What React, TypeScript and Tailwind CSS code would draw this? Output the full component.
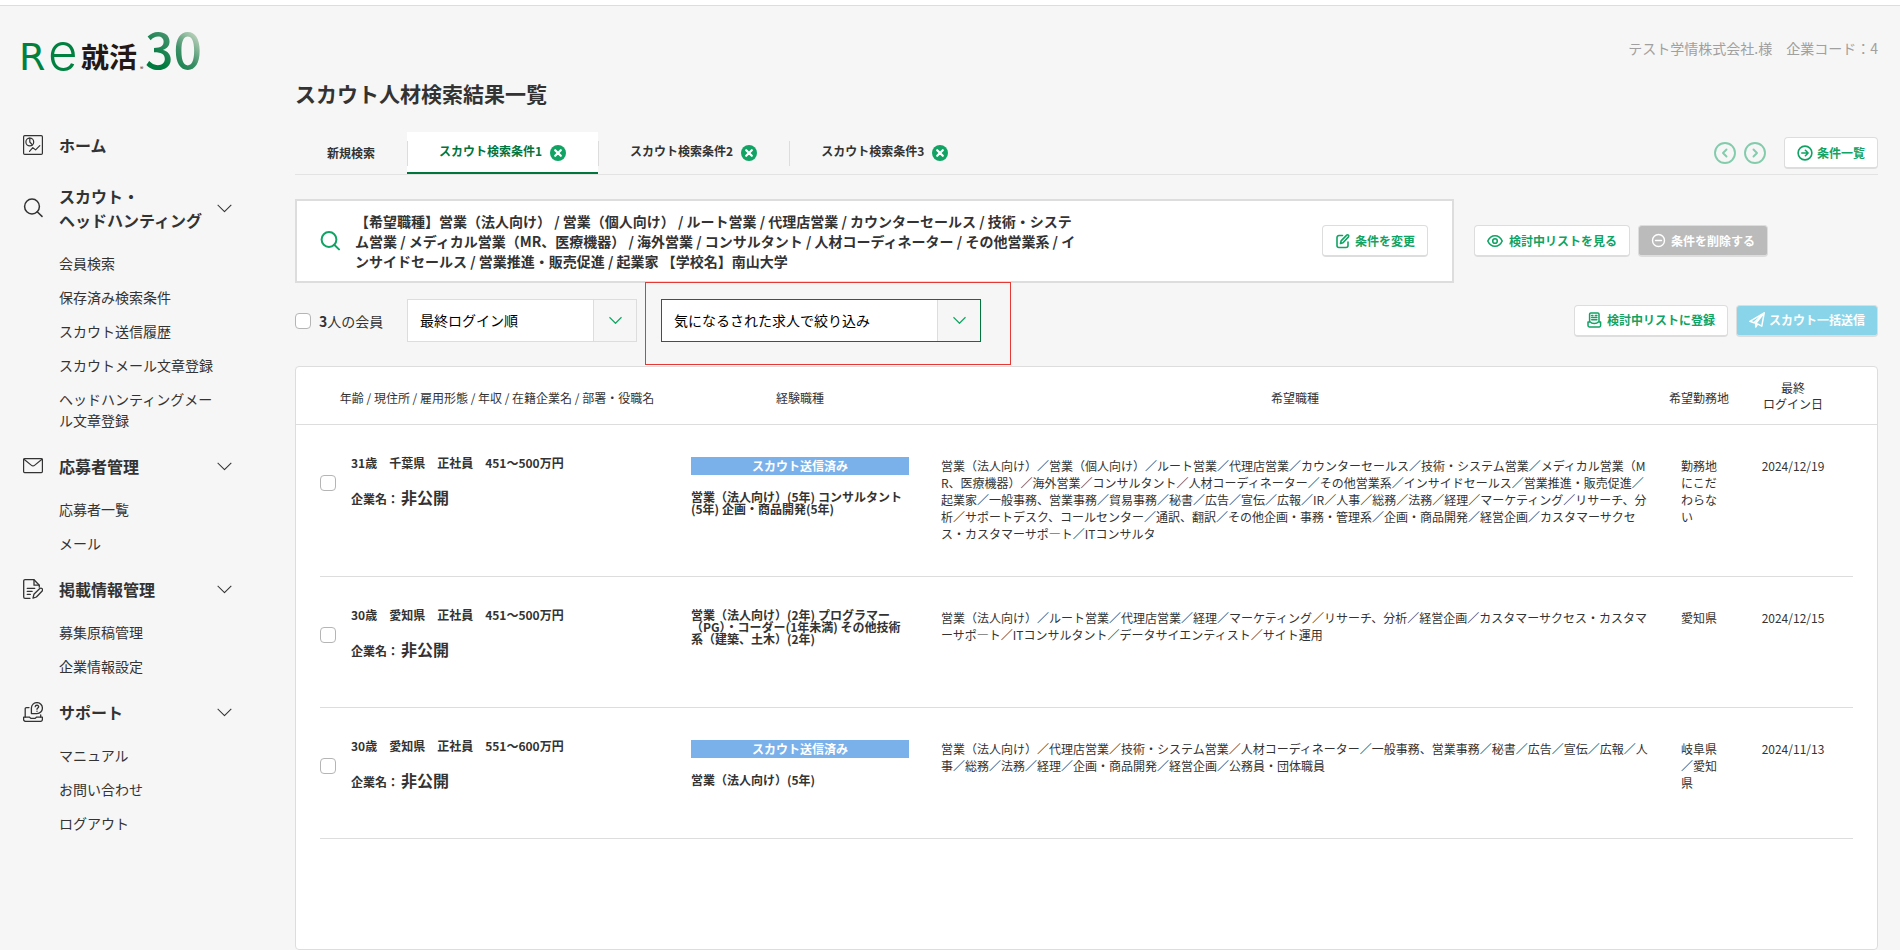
import type { ReactNode } from 'react'
import clsx from 'clsx'

interface MenuSection {
  title: string[]
  icon: ReactNode
  items: string[]
}

interface Member {
  profile: string
  scouted: boolean
  experience: string
  desired: string
  place: string
  lastLogin: string
}

const iconProps = {
  fill: 'none',
  stroke: 'currentColor',
  strokeLinecap: 'round',
  strokeLinejoin: 'round',
  'aria-hidden': true,
} as const

function HomeIcon() {
  return (
    <svg {...iconProps} viewBox="0 0 20 20" width="20" height="20" strokeWidth="1.2">
      <rect x="0.6" y="0.6" width="18.8" height="18.8" rx="1.2" />
      <circle cx="6.8" cy="7" r="3.9" />
      <path d="M6.8 3.1V7l2.6 2.9" />
      <path d="M6.5 16.3l3.3-3.6 2.8 2.2 4.2-4.2" />
    </svg>
  )
}

function SearchIcon({ strokeWidth = 1.5 }: { strokeWidth?: number }) {
  return (
    <svg {...iconProps} viewBox="0 0 20 20" width="20" height="20" strokeWidth={strokeWidth}>
      <circle cx="9" cy="8.5" r="7.4" />
      <path d="M14.2 13.8l4.8 4.6" />
    </svg>
  )
}

function MailIcon() {
  return (
    <svg {...iconProps} viewBox="0 0 20 20" width="20" height="20" strokeWidth="1.2">
      <rect x="0.6" y="2.6" width="18.8" height="14" rx="1" />
      <path d="M1 3.2l7.2 5.9c1.1.9 2.5.9 3.6 0L19 3.2" />
    </svg>
  )
}

function DocumentIcon() {
  return (
    <svg {...iconProps} viewBox="0 0 20 20" width="20" height="20" strokeWidth="1.3">
      <path d="M7 19.3H2A1.3 1.3 0 0 1 .7 18V2A1.3 1.3 0 0 1 2 .7h9l5.3 5.5v2" />
      <path d="M11 .9v5.3h5.1M4.3 9.4h7.4M4.3 12.4h4.8M4.3 15.4h3" />
      <path d="M10 19.2l.9-3.9 5.9-5.8c1.6-1.2 3.6.8 2.4 2.5l-5.8 6z" />
    </svg>
  )
}

function SupportIcon() {
  return (
    <svg {...iconProps} viewBox="0 0 20 20" width="20" height="20" strokeWidth="1.3">
      <path d="M2.2 15V6.8A1.2 1.2 0 0 1 3.4 5.6H6M17.7 12.8V15" />
      <path d="M.6 15.2h6l1.2 1.2h4.4l1.2-1.2h6v2.2a2 2 0 0 1-2 2H2.6a2 2 0 0 1-2-2z" />
      <path d="M8.4 11.6V6a5.5 5.5 0 1 1 5.5 5.6z" />
      <path d="M12.2 4.7c.2-2 3.6-1.9 3.5.1-.1 1.300-1.700 1.200-1.700 2.500M14 9.200v.1" />
    </svg>
  )
}

function ChevronDown({ size, strokeWidth = 1 }: { size: number; strokeWidth?: number }) {
  return (
    <svg {...iconProps} viewBox="0 0 14 14" width={size} height={size} strokeWidth={strokeWidth} strokeLinecap="square">
      <path d="M1 4l6 6 6-6" />
    </svg>
  )
}

function CloseIcon() {
  return (
    <svg viewBox="0 0 16 16" width="16" height="16" aria-hidden="true">
      <circle cx="8" cy="8" r="8" fill="#11a364" />
      <path d="M5.2 5.2l5.6 5.6M10.8 5.2l-5.6 5.6" stroke="#fff" strokeWidth="2.2" strokeLinecap="round" />
    </svg>
  )
}

function CircleChevron({ d }: { d: string }) {
  return (
    <svg {...iconProps} viewBox="0 0 22 22" width="22" height="22" strokeWidth="1.9">
      <circle cx="11" cy="11" r="10" />
      <path d={d} />
    </svg>
  )
}

function CircleArrowIcon() {
  return (
    <svg {...iconProps} viewBox="0 0 16 16" width="16" height="16" strokeWidth="1.6">
      <circle cx="8" cy="8" r="6.9" />
      <path d="M4.8 8h6M8.4 5.3L11.1 8l-2.7 2.7" />
    </svg>
  )
}

function EditIcon() {
  return (
    <svg {...iconProps} viewBox="0 0 16 16" width="16" height="16" strokeWidth="1.6">
      <path d="M7.5 2.5H4a2 2 0 0 0-2 2v8a2 2 0 0 0 2 2h7a2 2 0 0 0 2-2V9" />
      <path d="M5.5 10.5l.6-2.6 5.6-5.8c1.1-.9 2.7.5 1.8 1.8L8 9.8z" />
    </svg>
  )
}

function EyeIcon() {
  return (
    <svg {...iconProps} viewBox="0 0 18 16" width="18" height="16" strokeWidth="1.6">
      <path d="M.8 8C2.3 4.6 4.8 2.7 8 2.7S13.7 4.6 15.2 8c-1.5 3.4-4 5.3-7.2 5.3S2.3 11.4.8 8z" />
      <circle cx="8" cy="8" r="2.3" />
    </svg>
  )
}

function MinusCircleIcon() {
  return (
    <svg {...iconProps} viewBox="0 0 16 16" width="16" height="16" strokeWidth="1.4">
      <circle cx="7.5" cy="7.5" r="6" />
      <path d="M4.5 7.5h6" />
    </svg>
  )
}

function TrayIcon() {
  return (
    <svg {...iconProps} viewBox="0 0 16 16" width="16" height="16" strokeWidth="1.5">
      <path d="M2.6 9.5V2A1.2 1.2 0 0 1 3.8.9h7A1.2 1.2 0 0 1 12 2v7.5" />
      <path d="M4.7 3.5h1.2M8.3 3.5h1.6M4.7 5.6h5.2M4.7 7.7h5.2" />
      <path d="M1 10h2.500c1 2 6.600 2 7.600 0h2.500v3.600a1.400 1.400 0 0 1-1.400 1.400H2.400A1.400 1.400 0 0 1 1 13.600z" />
    </svg>
  )
}

function PlaneIcon() {
  return (
    <svg {...iconProps} viewBox="0 0 16 16" width="16" height="16" strokeWidth="1.5">
      <path d="M.9 9.3L15.2.9l-2.4 13.3-4.3-2.3zM.9 9.3l4 1.5L15.2.9 6.7 11.5v3.6l1.8-3" />
    </svg>
  )
}

function Logo() {
  return (
    <svg viewBox="0 0 180 46" width="180" height="46" className="overflow-visible" role="img" aria-label="Re就活 30">
      <defs>
        <linearGradient id="anniversary" gradientUnits="userSpaceOnUse" x1="140" y1="36" x2="172" y2="2">
          <stop offset="0" stopColor="#007a3e" />
          <stop offset="0.5" stopColor="#3d9068" />
          <stop offset="1" stopColor="#c3d6c0" />
        </linearGradient>
      </defs>
      <g fill="#008140">
        <text x="-4" y="40" fontSize="38" fontFamily="'DejaVu Sans', sans-serif">R</text>
        <text x="25" y="40" fontSize="51" fontWeight="300" fontFamily="Inter, sans-serif">e</text>
      </g>
      <text x="58" y="38" fontSize="28" fontWeight="700" fill="#231815" fontFamily="'Noto Sans CJK JP', sans-serif">
        就活
      </text>
      <text x="117" y="40" fontSize="5" fill="#231815" fontFamily="Inter, sans-serif">®</text>
      <text x="122" y="39" fontSize="50" fontWeight="500" fill="url(#anniversary)" fontFamily="'Noto Sans CJK JP', sans-serif">
        30
      </text>
    </svg>
  )
}

const menu: MenuSection[] = [
  {
    title: ['スカウト・', 'ヘッドハンティング'],
    icon: <SearchIcon />,
    items: ['会員検索', '保存済み検索条件', 'スカウト送信履歴', 'スカウトメール文章登録', 'ヘッドハンティングメール文章登録'],
  },
  { title: ['応募者管理'], icon: <MailIcon />, items: ['応募者一覧', 'メール'] },
  { title: ['掲載情報管理'], icon: <DocumentIcon />, items: ['募集原稿管理', '企業情報設定'] },
  { title: ['サポート'], icon: <SupportIcon />, items: ['マニュアル', 'お問い合わせ', 'ログアウト'] },
]

const savedTabs = ['スカウト検索条件1', 'スカウト検索条件2', 'スカウト検索条件3']

const members: Member[] = [
  {
    profile: '31歳　千葉県　正社員　451～500万円',
    scouted: true,
    experience: '営業（法人向け）(5年) コンサルタント(5年) 企画・商品開発(5年)',
    desired:
      '営業（法人向け）／営業（個人向け）／ルート営業／代理店営業／カウンターセールス／技術・システム営業／メディカル営業（MR、医療機器）／海外営業／コンサルタント／人材コーディネーター／その他営業系／インサイドセールス／営業推進・販売促進／起業家／一般事務、営業事務／貿易事務／秘書／広告／宣伝／広報／IR／人事／総務／法務／経理／マーケティング／リサーチ、分析／サポートデスク、コールセンター／通訳、翻訳／その他企画・事務・管理系／企画・商品開発／経営企画／カスタマーサクセス・カスタマーサポ―ト／ITコンサルタ',
    place: '勤務地にこだわらない',
    lastLogin: '2024/12/19',
  },
  {
    profile: '30歳　愛知県　正社員　451～500万円',
    scouted: false,
    experience: '営業（法人向け）(2年) プログラマー（PG）・コーダー(1年未満) その他技術系（建築、土木）(2年)',
    desired:
      '営業（法人向け）／ルート営業／代理店営業／経理／マーケティング／リサーチ、分析／経営企画／カスタマーサクセス・カスタマーサポ―ト／ITコンサルタント／データサイエンティスト／サイト運用',
    place: '愛知県',
    lastLogin: '2024/12/15',
  },
  {
    profile: '30歳　愛知県　正社員　551～600万円',
    scouted: true,
    experience: '営業（法人向け）(5年)',
    desired:
      '営業（法人向け）／代理店営業／技術・システム営業／人材コーディネーター／一般事務、営業事務／秘書／広告／宣伝／広報／人事／総務／法務／経理／企画・商品開発／経営企画／公務員・団体職員',
    place: '岐阜県／愛知県',
    lastLogin: '2024/11/13',
  },
]

function Checkbox({ label, id }: { label: string; id?: string }) {
  return (
    <input
      id={id}
      type="checkbox"
      aria-label={label}
      className="block size-4 shrink-0 appearance-none rounded border border-[#b5b5b5] bg-white checked:bg-[#11a364]"
    />
  )
}

function ActionButton({ icon, children, className }: { icon: ReactNode; children: ReactNode; className?: string }) {
  return (
    <button
      type="button"
      className={clsx(
        'flex h-8 shrink-0 items-center gap-1 rounded border border-b-2 border-[#ddd] px-3 text-xs font-bold whitespace-nowrap',
        className ?? 'bg-white text-[#11a364]',
      )}
    >
      {icon}
      {children}
    </button>
  )
}

function SelectBox({ label, option, className }: { label: string; option: string; className: string }) {
  return (
    <div className={clsx('relative h-[43px] border bg-white', className)}>
      <select aria-label={label} className="h-full w-full appearance-none bg-transparent pr-12 pb-0.5 pl-3 text-sm text-black">
        <option>{option}</option>
      </select>
      <span className="pointer-events-none absolute inset-y-0 right-0 flex w-[43px] items-center justify-center border-l border-[#ddd] bg-[#f6f6f6] text-[#11a364]">
        <ChevronDown size={13} strokeWidth={1.3} />
      </span>
    </div>
  )
}

function Sidebar() {
  return (
    <aside className="w-[295px] shrink-0 pt-6 pl-[23px]">
      <a href="#" className="block">
        <Logo />
      </a>
      <nav className="mt-[57px] w-[209px]">
        <a href="#" className="flex items-center gap-4 leading-6 font-bold">
          <HomeIcon />
          ホーム
        </a>
        {menu.map((section, i) => (
          <section key={section.title[0]} className={i === 0 ? 'mt-[27px]' : 'mt-[23px]'}>
            <button type="button" className="flex w-full items-center text-left leading-6 font-bold">
              {section.icon}
              <span className="ml-4 flex-1 whitespace-nowrap">
                {section.title.map((line) => (
                  <span key={line} className="block">
                    {line}
                  </span>
                ))}
              </span>
              <ChevronDown size={15} />
            </button>
            <ul className="mt-[21px] ml-9 flex w-[155px] flex-col gap-[13px] text-sm leading-[21px]">
              {section.items.map((item) => (
                <li key={item}>
                  <a href="#" className="block break-all">
                    {item}
                  </a>
                </li>
              ))}
            </ul>
          </section>
        ))}
      </nav>
    </aside>
  )
}

function Tabs() {
  return (
    <div className="mt-6 flex justify-between border-b border-[#e3e3e3] text-xs font-bold">
      <ul className="flex h-[42px]">
        <li className="flex items-center px-8">
          <button type="button">新規検索</button>
        </li>
        {savedTabs.map((tab, i) => (
          <li
            key={tab}
            className={clsx('relative flex items-center', i === 0 && 'bg-white text-[#00753e]')}
          >
            <span className="h-[25px] w-px bg-[#ddd]" />
            <button type="button" className="pr-2 pb-1 pl-[31px]">
              {tab}
            </button>
            <button type="button" aria-label={`${tab}を閉じる`} className="pr-8">
              <CloseIcon />
            </button>
            {i === 0 && <span className="absolute inset-x-0 bottom-0 h-0.5 bg-[#00753e]" />}
          </li>
        ))}
      </ul>
      <div className="flex items-center text-[#11a364]">
        <button type="button" aria-label="前へ" className="mr-2 opacity-50">
          <CircleChevron d="M12.500 7.500L9 11l3.500 3.500" />
        </button>
        <button type="button" aria-label="次へ" className="mr-[18px] opacity-50">
          <CircleChevron d="M9.500 7.500L13 11l-3.500 3.500" />
        </button>
        <ActionButton icon={<CircleArrowIcon />}>条件一覧</ActionButton>
      </div>
    </div>
  )
}

function MemberRow({ member }: { member: Member }) {
  return (
    <tr className="h-[131px] align-top">
      <td />
      <td className="border-b border-[#ddd] pt-[50px]">
        <Checkbox label={member.profile} />
      </td>
      <td className="border-b border-[#ddd] pt-[31px] font-bold">
        <p className="leading-[13px]">{member.profile}</p>
        <p className="mt-4 leading-6">
          企業名：<span className="ml-0.5 text-base leading-6">非公開</span>
        </p>
      </td>
      <td className="border-b border-[#ddd] px-8 pt-8 leading-3 font-bold">
        {member.scouted && (
          <p className="mb-4 bg-[#7bb1ea] text-center leading-[18px] text-white">スカウト送信済み</p>
        )}
        <p>{member.experience}</p>
      </td>
      <td className="border-b border-[#ddd] pt-8 pb-[34px] leading-[17px] break-all">{member.desired}</td>
      <td className="border-b border-[#ddd] px-8 pt-8 leading-[17px] break-all">{member.place}</td>
      <td className="border-b border-[#ddd] pt-8 pr-4 text-center leading-[17px]">{member.lastLogin}</td>
      <td />
    </tr>
  )
}

function MemberTable() {
  return (
    <div className="mt-px min-h-[584px] rounded border border-[#ddd] bg-white">
      <table className="w-full table-fixed border-separate border-spacing-0 text-xs">
        <colgroup>
          <col className="w-6" />
          <col className="w-[31px]" />
          <col className="w-[308px]" />
          <col className="w-[282px]" />
          <col />
          <col className="w-[100px]" />
          <col className="w-[104px]" />
          <col className="w-6" />
        </colgroup>
        <thead>
          <tr className="h-[58px] leading-4 [&>th]:border-b [&>th]:border-[#ddd] [&>th]:font-normal">
            <th />
            <th colSpan={2} className="pt-1 pl-[15px]">
              年齢 / 現住所 / 雇用形態 / 年収 / 在籍企業名 / 部署・役職名
            </th>
            <th className="pt-1">経験職種</th>
            <th className="pt-1">希望職種</th>
            <th className="pt-1">希望勤務地</th>
            <th className="pr-4">
              最終
              <br />
              ログイン日
            </th>
            <th />
          </tr>
        </thead>
        <tbody>
          {members.map((member) => (
            <MemberRow key={member.lastLogin} member={member} />
          ))}
        </tbody>
      </table>
    </div>
  )
}

export default function App() {
  return (
    <div className="min-h-screen bg-[#f6f6f6] font-['Noto_Sans_CJK_JP',sans-serif] text-[#333]">
      <div className="h-1.5 border-b border-[#ddd] bg-white" />
      <div className="flex">
        <Sidebar />
        <main className="min-w-0 flex-1 pt-8 pr-[22px]">
          <p className="text-right text-sm leading-5 text-[#a0a0a0]">テスト学情株式会社.様　企業コード：4</p>
          <h1 className="mt-5 text-[21px] leading-[30px] font-bold">スカウト人材検索結果一覧</h1>
          <Tabs />

          {/* Current search condition */}
          <div className="mt-6 flex items-center">
            <div className="flex flex-1 items-center border-2 border-[#ddd] bg-white py-2.5 pr-6 pl-[23px]">
              <span className="text-[#11a364]">
                <SearchIcon strokeWidth={2} />
              </span>
              <p className="ml-[15px] w-[724px] text-sm leading-5 font-bold">
                【希望職種】営業（法人向け） / 営業（個人向け） / ルート営業 / 代理店営業 / カウンターセールス /
                技術・システム営業 / メディカル営業（MR、医療機器） / 海外営業 / コンサルタント /
                人材コーディネーター / その他営業系 / インサイドセールス / 営業推進・販売促進 / 起業家
                【学校名】南山大学
              </p>
              <div className="ml-auto">
                <ActionButton icon={<EditIcon />}>条件を変更</ActionButton>
              </div>
            </div>
            <div className="mr-[110px] ml-5 flex gap-2">
              <ActionButton icon={<EyeIcon />}>検討中リストを見る</ActionButton>
              <ActionButton icon={<MinusCircleIcon />} className="bg-[#bbb] text-white">
                条件を削除する
              </ActionButton>
            </div>
          </div>

          {/* Sort, filter and bulk actions */}
          <div className="-mt-px flex items-center">
            <div className="mb-1.5 flex w-[112px] items-center gap-2">
              <Checkbox id="select-all" label="すべて選択" />
              <label htmlFor="select-all" className="text-sm">
                <b>3</b>人の会員
              </label>
            </div>
            <SelectBox label="並び順" option="最終ログイン順" className="mb-1.5 w-[230px] border-[#ddd]" />
            <div className="ml-2 border border-[#e53935] pt-4 pr-[29px] pb-[22px] pl-[15px]">
              <SelectBox label="求人で絞り込み" option="気になるされた求人で絞り込み" className="w-80 border-[#00753e]" />
            </div>
            <div className="mb-1.5 ml-auto flex gap-2">
              <ActionButton icon={<TrayIcon />}>検討中リストに登録</ActionButton>
              <ActionButton icon={<PlaneIcon />} className="bg-[#89d4e8] text-white">
                スカウト一括送信
              </ActionButton>
            </div>
          </div>

          <MemberTable />
        </main>
      </div>
    </div>
  )
}
